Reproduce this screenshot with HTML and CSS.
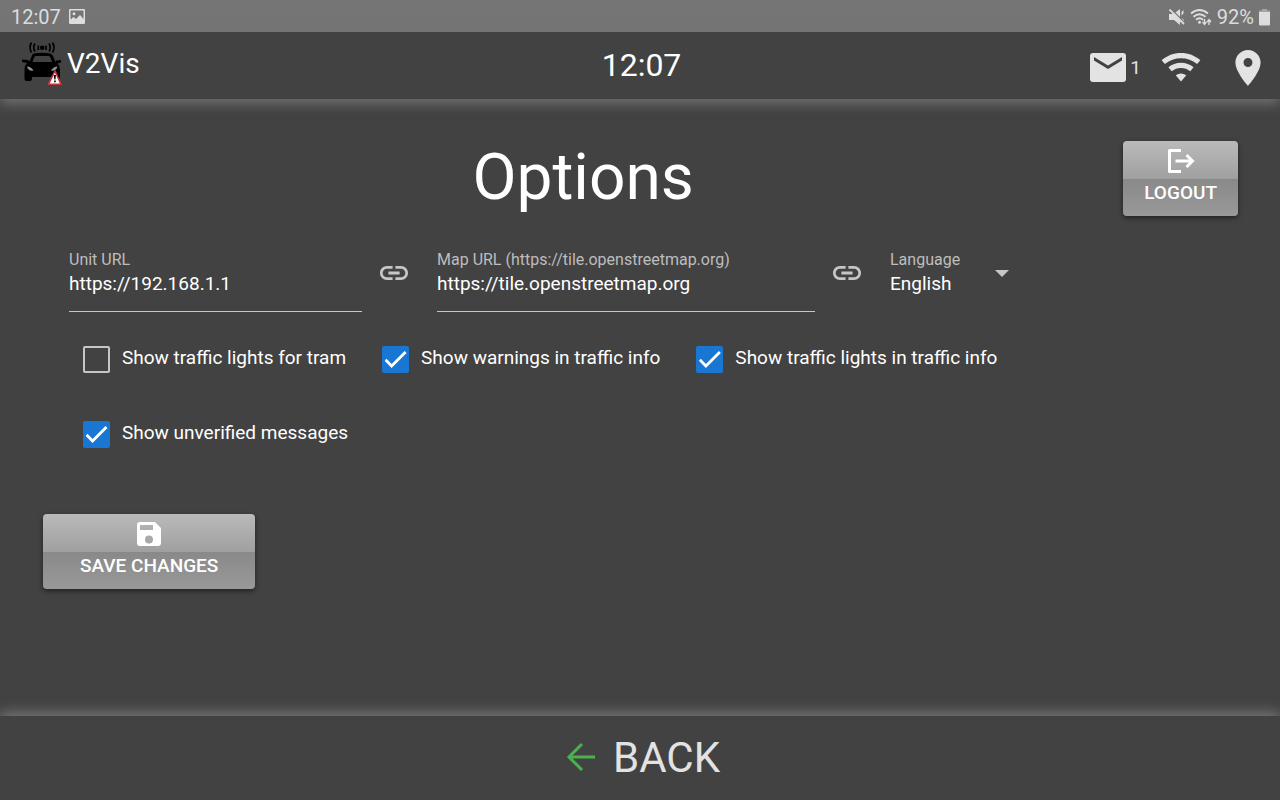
FILE: index.html
```html
<!DOCTYPE html>
<html lang="en">
<head>
    <meta charset="utf-8">
    <meta name="viewport" content="width=device-width, initial-scale=1">
    <title>V2Vis - Options</title>
    <link rel="stylesheet" href="styles.css">
</head>
<body>

    <div class="statusbar">
        <div class="status-group">
            <span>12:07</span>
            <svg class="status-picture" viewBox="0 0 16 16"><path fill="currentColor" fill-rule="evenodd" d="M1 0h14a1 1 0 0 1 1 1v13a1 1 0 0 1-1 1H1a1 1 0 0 1-1-1V1a1 1 0 0 1 1-1zM1.500 1.500v9l3-2.500 2.500 2 4-4 3.500 4v-8.500zM5 3.200a1.500 1.500 0 1 1 0 3 1.500 1.500 0 0 1 0-3z"/></svg>
        </div>
        <div class="status-group status-right">
            <svg class="status-mute" viewBox="0 0 16 16"><path fill="currentColor" d="M0 5h4.500L11 0v16l-6-5H0zM12.500 3l2-2v3.500l-2 2zM12.500 9l2.500 2v2l-2.500-1z"/><path d="M1.500-.500l14 14" stroke="#757575" stroke-width="1.500"/><path d="M.500.500l14.500 14.500" stroke="currentColor" stroke-width="1.800"/></svg>
            <svg class="status-wifi" viewBox="0 0 22 17"><g fill="none" stroke="currentColor" stroke-width="1.800"><path d="M1 4.500q8.500-7 17 0M3.500 7.800q6-5 12 0M6 10.800q3.500-3 7 0"/><path stroke-width="1.400" d="M14.500 10v5M12.500 13l2 2.500 2-2.500M19 16v-5M17 13l2-2.500 2 2.500"/></g><circle cx="9.500" cy="13.300" r="1.500" fill="currentColor"/></svg>
            <span>92%</span>
            <svg class="status-battery" viewBox="0 0 11 17"><path fill="#a5a5a5" d="M3 0h5v1.500h3V4H0V1.500h3z"/><path fill="currentColor" d="M0 3h11V15.500a1 1 0 0 1-1 1H1a1 1 0 0 1-1-1z"/></svg>
        </div>
    </div>

    <header class="header">
        <div class="brand">
            <svg class="logo" viewBox="0 0 40 46">
                <!-- signal -->
                <g fill="none" stroke="#000" stroke-width="1.700">
                    <path d="M9.500 1.500q-3 5 0 10M13 2.500q-2.500 4 0 8M27 2.500q2.500 4 0 8M30.500 1.500q3 5 0 10M16.300 4.500v4.500M24 4.500v4.500"/>
                </g>
                <circle cx="20.200" cy="6.700" r="2.300"/>
                <!-- car -->
                <path d="M11.500 12.500Q20 11 28.500 12.500Q30 13 31 15l2.500 6 1-1.500 4.500-.500v2.500l-3.500 1q2.500 2.500 2.500 6V35q0 5-3 5h-3q-2 0-2-4H10v2q0 2-2 2H4.500q-2 0-2-2V28q0-3.500 2.500-6L0 21v-2.500l6 .500 1.500 1.500L10 14.500q.500-1.500 1.500-2z"/>
                <path fill="#424242" d="M13.500 15h13.500q1 0 2 3l1 3H10.500l1-3q1-3 2-3z"/>
                <path fill="#8c8c8c" d="M5 25.500q4 0 6.500 4-5.500 1-6.500-4zM35.500 25.500q-4 0-6.500 4 5.500 1 6.500-4z"/>
                <!-- warning -->
                <path fill="#fff" stroke="#c9303a" stroke-width="1.600" stroke-linejoin="round" d="M33 30L39 43.200H26.500z"/>
                <path fill="#000" d="M31.900 34h2l-.400 4.500h-1.200zM32.100 39.500h1.700V41.200h-1.700z"/>
            </svg>
            <span>V2Vis</span>
        </div>
        <div class="clock">12:07</div>
        <div class="indicators">
            <div class="mail">
                <svg class="icon-mail" viewBox="0 0 36 30"><path fill="currentColor" fill-rule="evenodd" d="M3 0h30a3 3 0 0 1 3 3v23a3 3 0 0 1-3 3H3a3 3 0 0 1-3-3V3a3 3 0 0 1 3-3zM4 4v3.500l14 8.500 14-8.500V4l-14 8.500z"/></svg>
                <span>1</span>
            </div>
            <svg class="icon-wifi" viewBox="0 0 24 18"><path fill="currentColor" d="M12 17.700l3.300-3.900Q12 11.600 8.700 13.800zM12 0C7.500 0 3.300 1.600 0 4.500l2 2.400Q6.500 3.200 12 3.200t10 3.700l2-2.400C20.700 1.600 16.500 0 12 0zM12 6.100c-2.900 0-5.600 1-7.800 2.800l2 2.500Q8.700 9.300 12 9.300t5.800 2.100l2-2.500C17.600 7.100 14.900 6.100 12 6.100z"/></svg>
            <svg class="icon-pin" viewBox="5 2 14 20"><path fill="currentColor" d="M12 2C8.130 2 5 5.130 5 9c0 5.250 7 13 7 13s7-7.750 7-13c0-3.870-3.130-7-7-7zm0 9.500c-1.380 0-2.500-1.120-2.500-2.500s1.120-2.500 2.500-2.500 2.500 1.120 2.500 2.500-1.120 2.500-2.500 2.500z"/></svg>
        </div>
    </header>

    <main class="content">
        <div class="title-row">
            <h1>Options</h1>
            <button class="btn" type="button">
                <svg viewBox="0 0 28 26"><path fill="none" stroke="currentColor" stroke-width="3" stroke-linejoin="round" d="M14 2.500H2.500V23.500H14"/><path fill="none" stroke="currentColor" stroke-width="3" d="M8.500 13H25M19.500 7l6 6-6 6"/></svg>
                Logout
            </button>
        </div>

        <form class="options">
            <div class="fields">
                <div class="field unit">
                    <label for="unit">Unit URL</label>
                    <input id="unit" type="text" value="https://192.168.1.1">
                </div>
                <svg class="icon-link" viewBox="2 7 20 10"><path fill="currentColor" d="M3.900 12c0-1.710 1.390-3.100 3.100-3.100h4V7H7c-2.760 0-5 2.240-5 5s2.240 5 5 5h4v-1.900H7c-1.710 0-3.100-1.390-3.100-3.100zM8 13h8v-2H8v2zm9-6h-4v1.900h4c1.710 0 3.100 1.390 3.100 3.100s-1.390 3.100-3.100 3.100h-4V17h4c2.760 0 5-2.240 5-5s-2.240-5-5-5z"/></svg>
                <div class="field map">
                    <label for="map">Map URL (https://tile.openstreetmap.org)</label>
                    <input id="map" type="text" value="https://tile.openstreetmap.org">
                </div>
                <svg class="icon-link" viewBox="2 7 20 10"><path fill="currentColor" d="M3.900 12c0-1.710 1.390-3.100 3.100-3.100h4V7H7c-2.760 0-5 2.240-5 5s2.240 5 5 5h4v-1.900H7c-1.710 0-3.100-1.390-3.100-3.100zM8 13h8v-2H8v2zm9-6h-4v1.900h4c1.710 0 3.100 1.390 3.100 3.100s-1.390 3.100-3.100 3.100h-4V17h4c2.760 0 5-2.240 5-5s-2.240-5-5-5z"/></svg>
                <div class="language">
                    <div class="field">
                        <label for="language">Language</label>
                        <select id="language">
                            <option>English</option>
                        </select>
                    </div>
                    <svg class="icon-arrow" viewBox="0 0 14 7"><path fill="currentColor" d="M0 0h14L7 7z"/></svg>
                </div>
            </div>

            <div class="checks">
                <label class="check"><input type="checkbox"><span>Show traffic lights for tram</span></label>
                <label class="check"><input type="checkbox" checked><span>Show warnings in traffic info</span></label>
                <label class="check"><input type="checkbox" checked><span>Show traffic lights in traffic info</span></label>
                <label class="check"><input type="checkbox" checked><span>Show unverified messages</span></label>
            </div>

            <button class="btn save" type="button">
                <svg viewBox="0 0 28 26"><path fill="currentColor" fill-rule="evenodd" d="M5 1h15l6 6v15a3 3 0 0 1-3 3H5a3 3 0 0 1-3-3V4a3 3 0 0 1 3-3zM5 4v5h13V4zM14 14.500a4 4 0 1 0 0 8 4 4 0 0 0 0-8z"/></svg>
                Save changes
            </button>
        </form>
    </main>

    <footer class="footer">
        <button class="back" type="button">
            <svg viewBox="0 0 30 30"><path fill="none" stroke="currentColor" stroke-width="3" d="M29 15H3M16 2L3 15l13 13"/></svg>
            BACK
        </button>
    </footer>

</body>
</html>
```
FILE: styles.css
```css
* {
    box-sizing: border-box;
}

body {
    margin: 0;
    min-height: 100vh;
    display: flex;
    flex-direction: column;
    font-family: Roboto, sans-serif;
    font-size: 19px;
    color: #fff;
    background-color: #424242;
}

svg {
    display: block;
    flex: none;
}

button,
input,
select {
    font-family: inherit;
    color: inherit;
}

/* system bar */
.statusbar {
    height: 32px;
    padding: 2px 10px 0 11px;
    display: flex;
    justify-content: space-between;
    align-items: center;
    font-size: 20px;
    color: #dedede;
    background-color: #757575;
}

.status-group {
    display: flex;
    align-items: center;
    gap: 8px;
}

.status-right {
    gap: 5px;
}

.status-picture,
.status-mute {
    width: 16px;
    height: 16px;
}

.status-wifi {
    width: 22px;
    height: 17px;
}

.status-battery {
    width: 11px;
    height: 17px;
}

/* app bar */
.header {
    height: 67px;
    padding: 0 19px 0 22px;
    display: grid;
    grid-template-columns: 1fr auto 1fr;
    align-items: center;
    box-shadow: 0 4px 12px #747474;
}

.brand {
    display: flex;
    align-items: center;
    gap: 5px;
    font-size: 28px;
    line-height: 40px;
    padding-bottom: 4px;
}

.logo {
    width: 40px;
    height: 46px;
}

.clock {
    font-size: 32px;
    padding-bottom: 2px;
}

.indicators {
    display: flex;
    justify-content: flex-end;
    align-items: center;
    color: #e3e3e3;
    padding-top: 4px;
}

.mail {
    display: flex;
    align-items: center;
    gap: 4px;
    margin-right: 20px;
}

.icon-mail {
    width: 36px;
    height: 30px;
}

.icon-wifi {
    width: 40px;
    height: 29px;
    margin-right: 34px;
}

.icon-pin {
    width: 26px;
    height: 36px;
}

/* options */
.content {
    flex: 1;
    padding: 42px 42px 24px 43px;
}

.title-row {
    display: flex;
    align-items: flex-start;
}

h1 {
    flex: 1;
    margin: 0;
    font-size: 64px;
    font-weight: 400;
    line-height: 74px;
    text-align: center;
}

.btn {
    height: 75px;
    padding: 0 21px 6px;
    display: flex;
    flex-direction: column;
    align-items: center;
    justify-content: center;
    gap: 8px;
    border: none;
    border-radius: 4px;
    font-size: 19px;
    font-weight: 500;
    line-height: 22px;
    text-transform: uppercase;
    background: linear-gradient(#bababa, #a0a0a0 50%, #898989 51%, #999);
    box-shadow: 0 2px 5px rgba(0, 0, 0, .5);
    cursor: pointer;
}

.btn svg {
    width: 28px;
    height: 26px;
}

.save {
    padding: 0 37px 6px;
}

.fields {
    display: flex;
    padding: 34px 26px 0;
}

.field {
    display: flex;
    flex-direction: column;
}

.unit {
    flex: 0 1 293px;
}

.map {
    flex: 0 1 378px;
}

.field label {
    font-size: 16px;
    line-height: 20px;
    color: #bdbdbd;
}

.field input,
.field select {
    width: 100%;
    height: 26px;
    padding: 0;
    border: none;
    outline: none;
    font-size: 19px;
    background: none;
    appearance: none;
}

.unit,
.map {
    height: 62px;
    border-bottom: 1px solid #c6c6c6;
}

.icon-link {
    width: 28px;
    height: 14px;
    margin: 16px 29px 0 18px;
    color: #c6c6c6;
}

.language {
    display: flex;
    gap: 35px;
}

.icon-arrow {
    width: 14px;
    height: 7px;
    margin-top: 20px;
    color: #c6c6c6;
}

.checks {
    display: flex;
    flex-wrap: wrap;
    gap: 48px 36px;
    padding: 34px 0 0 40px;
}

.check {
    display: flex;
    align-items: center;
    gap: 12px;
    cursor: pointer;
}

.check span {
    padding-bottom: 4px;
}

.check input {
    width: 27px;
    height: 27px;
    margin: 0;
    display: grid;
    place-items: center;
    appearance: none;
    border: 2px solid #c6c6c6;
    border-radius: 2px;
}

.check input:checked {
    border-color: #1976d2;
    background-color: #1976d2;
}

.check input:checked::before {
    content: "";
    width: 22px;
    height: 17px;
    background-color: #fff;
    clip-path: polygon(32% 77%, 9% 45%, 0 58%, 32% 100%, 100% 12%, 91% 0);
}

.save {
    margin-top: 66px;
}

/* bottom bar */
.footer {
    height: 84px;
    padding: 0 0 2px 6px;
    display: flex;
    justify-content: center;
    align-items: center;
    box-shadow: 0 -4px 12px #747474;
}

.back {
    display: flex;
    align-items: center;
    gap: 17px;
    padding: 0;
    border: none;
    font-size: 42px;
    color: #e3e3e3;
    background: none;
    cursor: pointer;
}

.back svg {
    width: 30px;
    height: 30px;
    color: #4caf50;
}
```
